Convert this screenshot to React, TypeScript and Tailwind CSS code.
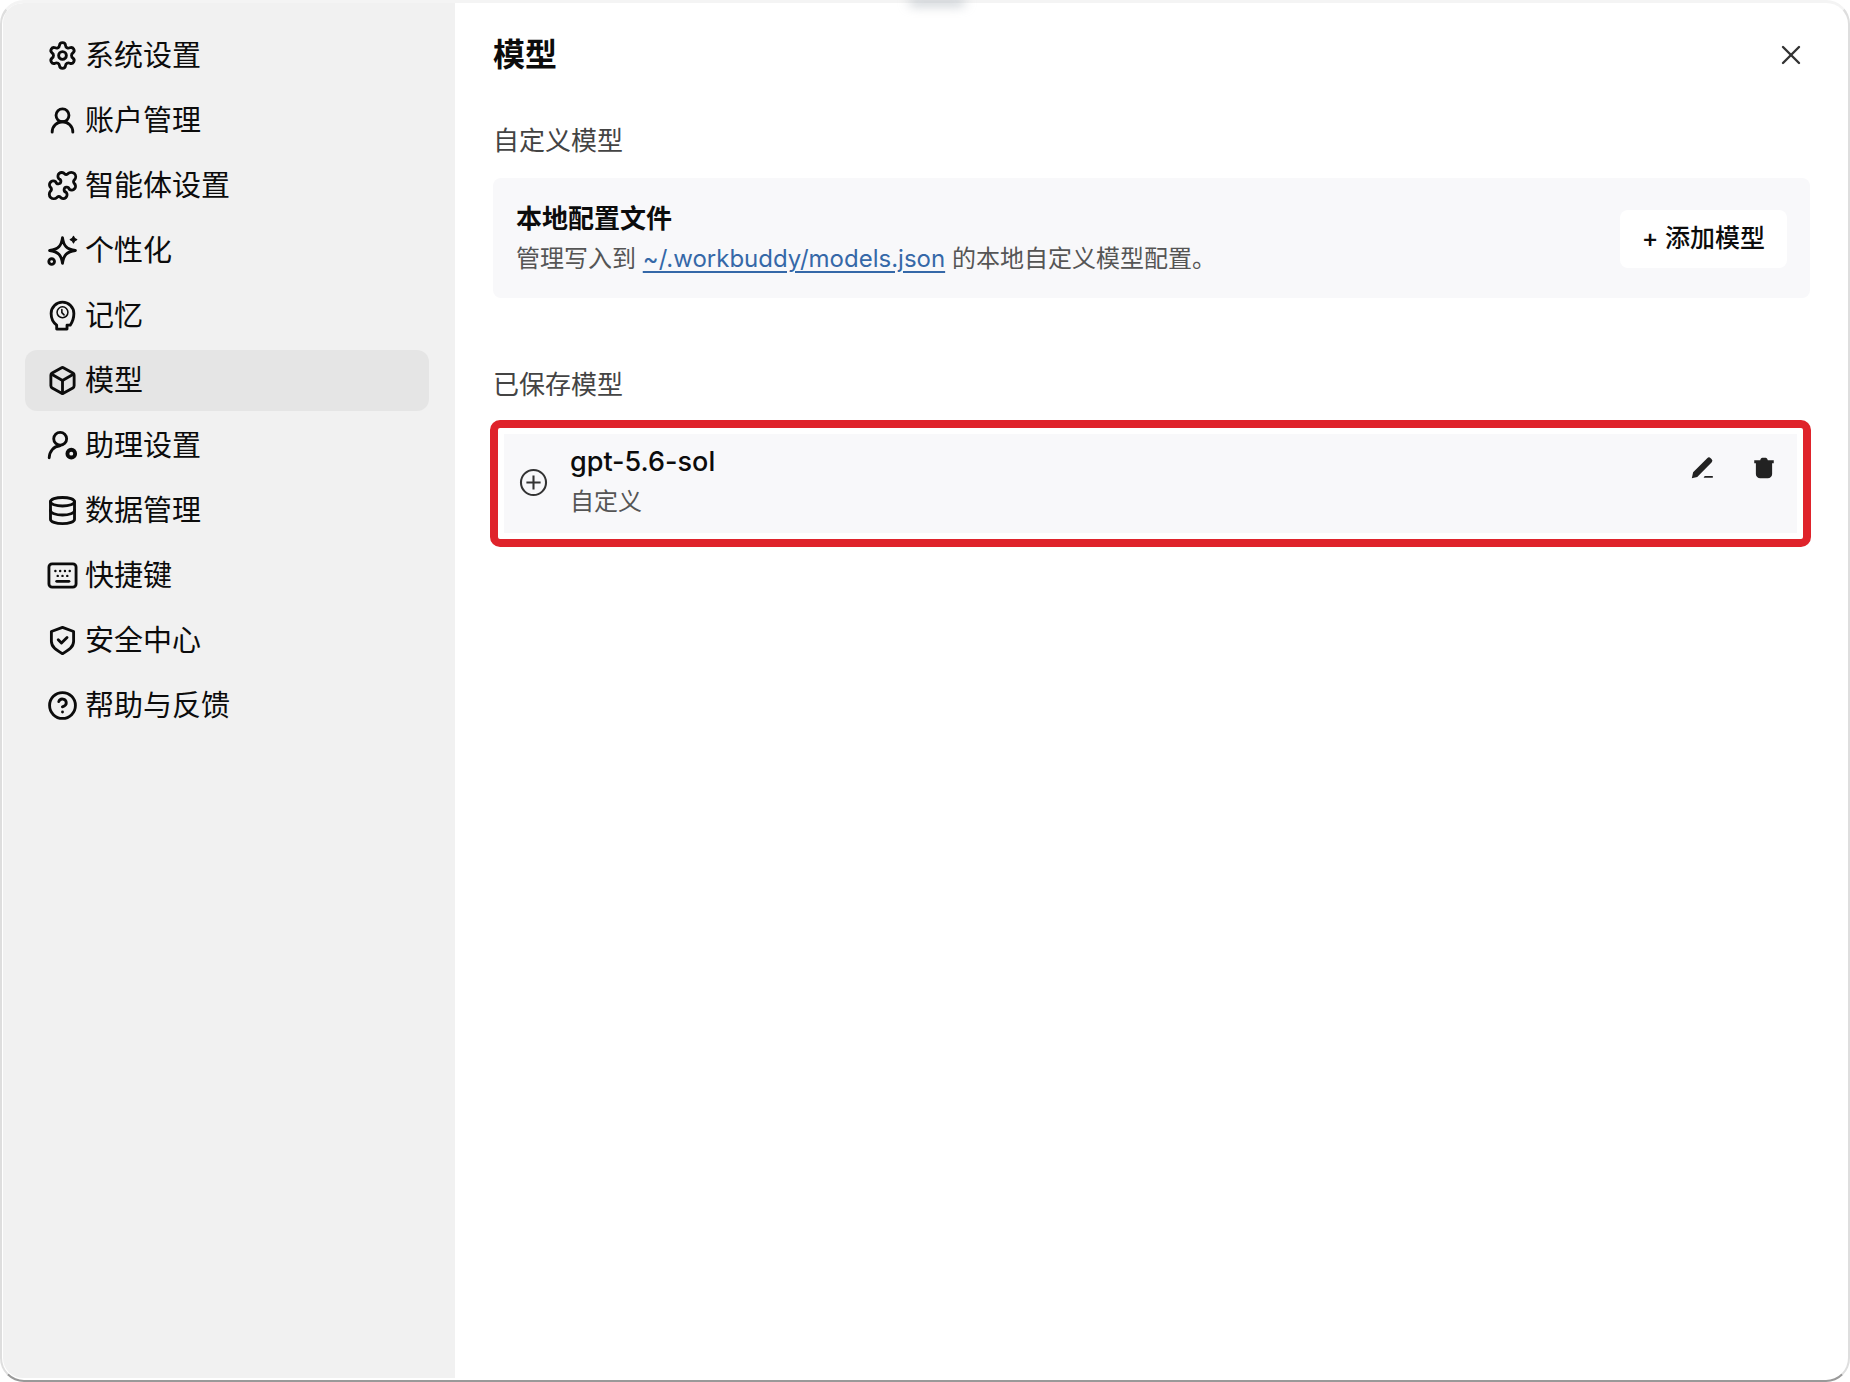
import { useState } from "react";
import type { ReactNode } from "react";
import { Box, CircleQuestionMark, Settings, UserRound, X } from "lucide-react";

const Icon = ({ children }: { children: ReactNode }) => (
  <svg
    viewBox="0 0 24 24"
    className="size-[31px] shrink-0"
    fill="none"
    stroke="currentColor"
    strokeWidth="2.2"
    strokeLinecap="round"
    strokeLinejoin="round"
    aria-hidden="true"
  >
    {children}
  </svg>
);

const PuzzleIcon = () => (
  <Icon>
    <path d="M9.2 6.800A2.900 2.900 0 0 1 13.600 2.900A1.800 1.800 0 0 0 16.300 2.800A2.800 2.800 0 0 1 21.200 7.700A1.800 1.800 0 0 0 21.100 10.400A2.900 2.900 0 0 1 17.200 14.800A2 2 0 1 0 14.800 17.200A2.900 2.900 0 0 1 10.400 21.100A1.800 1.800 0 0 0 7.700 21.200A2.800 2.800 0 0 1 2.800 16.300A1.800 1.800 0 0 0 2.900 13.600A2.900 2.900 0 0 1 6.800 9.200A2 2 0 1 0 9.200 6.800Z" />
  </Icon>
);

const SparkIcon = () => (
  <Icon>
    <path d="M12 2c.9 6.500 3.200 9 10 10-6.800 1-9.100 3.500-10 10-.9-6.500-3.200-9-10-10 6.800-1 9.100-3.500 10-10Z" />
    <path
      d="M20.500 1c.4 1.600.9 2.100 2.500 2.500-1.600.4-2.100.9-2.500 2.500-.4-1.600-.9-2.100-2.500-2.500 1.600-.4 2.100-.9 2.500-2.500Z"
      fill="currentColor"
      strokeWidth="1"
    />
    <circle cx="3.600" cy="20.600" r="2.200" />
  </Icon>
);

const MemoryIcon = () => (
  <Icon>
    <path d="M7.500 22.500v-3C4.800 17.500 3.200 14.500 3.200 10.500a8.800 8.800 0 0 1 17.600 0c0 4-1.300 6.800-2.800 9h-2.500v3Z" />
    <circle cx="12" cy="9.500" r="4.200" strokeWidth="1.200" />
    <path d="M11.500 7.300v2.500l1.700 1.700" strokeWidth="1.200" />
  </Icon>
);

const AssistantIcon = () => (
  <Icon>
    <circle cx="10.200" cy="6.800" r="5" />
    <path d="M1.700 21.500c.2-5 3.300-8.800 8.300-9.300" />
    <circle cx="18.800" cy="18.300" r="3" strokeWidth="3" />
  </Icon>
);

const DataIcon = () => (
  <Icon>
    <ellipse cx="12" cy="5.200" rx="9.300" ry="3.300" />
    <path d="M2.700 5.200v13.500c0 2 4.200 3.500 9.300 3.500s9.300-1.500 9.300-3.500V5.200" />
    <path d="M2.700 12c0 2 4.200 3.500 9.300 3.500s9.300-1.500 9.300-3.500" />
  </Icon>
);

const KeyboardIcon = () => (
  <Icon>
    <rect x="1.500" y="3" width="21" height="18" rx="2.500" />
    <path
      d="M6.500 8.500h.01M10.200 8.500h.01M13.900 8.500h.01M17.600 8.500h.01M8.300 12.300h.01M12 12.300h.01M15.700 12.300h.01"
      strokeWidth="1.900"
    />
    <path d="M7.500 16.500h9.500" />
  </Icon>
);

const ShieldIcon = () => (
  <Icon>
    <path d="m12 1.800 8.600 3.200v7.500c0 4.500-3.800 7-8.600 9.700-4.800-2.700-8.600-5.200-8.600-9.700V5Z" />
    <path d="m8.700 11.500 2.500 2.500 4.300-4.300" />
  </Icon>
);

const CirclePlusIcon = () => (
  <svg
    viewBox="0 0 24 24"
    className="size-[31px] shrink-0 self-center"
    fill="none"
    stroke="#333"
    strokeWidth="1.600"
    aria-hidden="true"
  >
    <circle cx="12" cy="12" r="9.700" />
    <path d="M12 6.500v11M6.500 12h11" />
  </svg>
);

const EditIcon = () => (
  <svg viewBox="0 0 24 24" className="size-[26px]" fill="currentColor" aria-hidden="true">
    <path d="M16.800 3a2.200 2.200 0 0 1 3.200 0l.8.800a2.200 2.200 0 0 1 0 3.200L7.600 20.200l-5 1.300L3.800 16Z" />
    <path d="M14.500 19.300H22v1.700h-8.500Z" />
  </svg>
);

const TrashIcon = () => (
  <svg viewBox="0 0 24 24" className="size-[26px]" fill="currentColor" aria-hidden="true">
    <path d="M8.500 4.800c.3-1.500 1-2.300 2-2.300h3c1 0 1.700.8 2 2.300H21V7.500h-1.500v10a4 4 0 0 1-4 4h-7a4 4 0 0 1-4-4v-10H3V4.800Z" />
  </svg>
);

const menuItems = [
  { label: "系统设置", icon: <Settings className="size-[31px]" strokeWidth={2.2} /> },
  { label: "账户管理", icon: <UserRound className="size-[31px]" strokeWidth={2.2} /> },
  { label: "智能体设置", icon: <PuzzleIcon /> },
  { label: "个性化", icon: <SparkIcon /> },
  { label: "记忆", icon: <MemoryIcon /> },
  { label: "模型", icon: <Box className="size-[31px]" strokeWidth={2.2} /> },
  { label: "助理设置", icon: <AssistantIcon /> },
  { label: "数据管理", icon: <DataIcon /> },
  { label: "快捷键", icon: <KeyboardIcon /> },
  { label: "安全中心", icon: <ShieldIcon /> },
  { label: "帮助与反馈", icon: <CircleQuestionMark className="size-[31px]" strokeWidth={2.2} /> },
];

const savedModels = [{ name: "gpt-5.6-sol", type: "自定义" }];

const Sidebar = () => {
  const [active, setActive] = useState("模型");

  return (
    <nav className="flex w-[452px] shrink-0 flex-col gap-1 rounded-l-[20px] bg-[#f1f1f1] px-[22px] py-[22px]">
      {menuItems.map((item) => (
        <button
          key={item.label}
          type="button"
          onClick={() => setActive(item.label)}
          className={`flex h-[61px] w-[404px] items-center gap-[7px] rounded-xl px-[22px] text-[29px] leading-9 ${
            active === item.label ? "bg-[#e5e5e5]" : ""
          }`}
        >
          {item.icon}
          {item.label}
        </button>
      ))}
    </nav>
  );
};

const App = () => {
  return (
    <div className="relative flex min-h-screen bg-white font-['Inter','Noto_Sans_CJK_SC',sans-serif] text-[#0c0c0c]">
      <div className="flex flex-1 overflow-hidden rounded-[24px] border-x-2 border-t-3 border-b-2 border-x-[#dedede] border-t-[#f4f4f4] border-b-[#999] bg-white pb-[2px] pl-px">
        <Sidebar />
        <main className="flex min-w-0 flex-1 flex-col px-[38px] pt-7">
          <header className="flex h-12 items-center justify-between pr-[3px]">
            <h1 className="text-[32px] leading-10 font-bold">模型</h1>
            <button type="button" aria-label="关闭" className="text-[#333]">
              <X className="size-8" strokeWidth={1.8} />
            </button>
          </header>

          <section className="mt-11">
            <h2 className="text-[26px] leading-9 text-[#444]">自定义模型</h2>
            <div className="mt-[19px] flex items-center justify-between rounded-lg bg-[#f8f8fa] px-[23px] pt-[21px] pb-[19px]">
              <div>
                <h3 className="text-[26px] leading-10 font-bold">本地配置文件</h3>
                <p className="text-[24px] leading-10 text-[#555]">
                  管理写入到{" "}
                  <a href="#models" className="text-[#3568a8] underline underline-offset-4">
                    ~/.workbuddy/models.json
                  </a>{" "}
                  的本地自定义模型配置。
                </p>
              </div>
              <button
                type="button"
                className="h-[58px] rounded-lg bg-white px-[22px] text-[25px] font-medium"
              >
                + 添加模型
              </button>
            </div>
          </section>

          <section className="mt-[69px]">
            <h2 className="text-[26px] leading-9 text-[#444]">已保存模型</h2>
            <ul className="-mr-px -ml-[3px] mt-[17px] rounded-[10px] border-8 border-[#df232b] p-[6px]">
              {savedModels.map((model) => (
                <li key={model.name} className="flex gap-[21px] bg-[#f8f8fa] px-[14px] pt-2 pb-[11px]">
                  <CirclePlusIcon />
                  <div className="flex-1">
                    <div className="text-[27px] leading-10 font-medium">{model.name}</div>
                    <div className="text-[24px] leading-10 text-[#555]">{model.type}</div>
                  </div>
                  <div className="flex h-[52px] items-center gap-9 pr-[6px] text-[#222]">
                    <button type="button" aria-label="编辑">
                      <EditIcon />
                    </button>
                    <button type="button" aria-label="删除">
                      <TrashIcon />
                    </button>
                  </div>
                </li>
              ))}
            </ul>
          </section>
        </main>
      </div>
      <div className="absolute top-0 left-1/2 h-1 w-14 -translate-x-4 rounded-b-full bg-[#8f9aa5] blur-[6px]" />
    </div>
  );
};

export default App;
